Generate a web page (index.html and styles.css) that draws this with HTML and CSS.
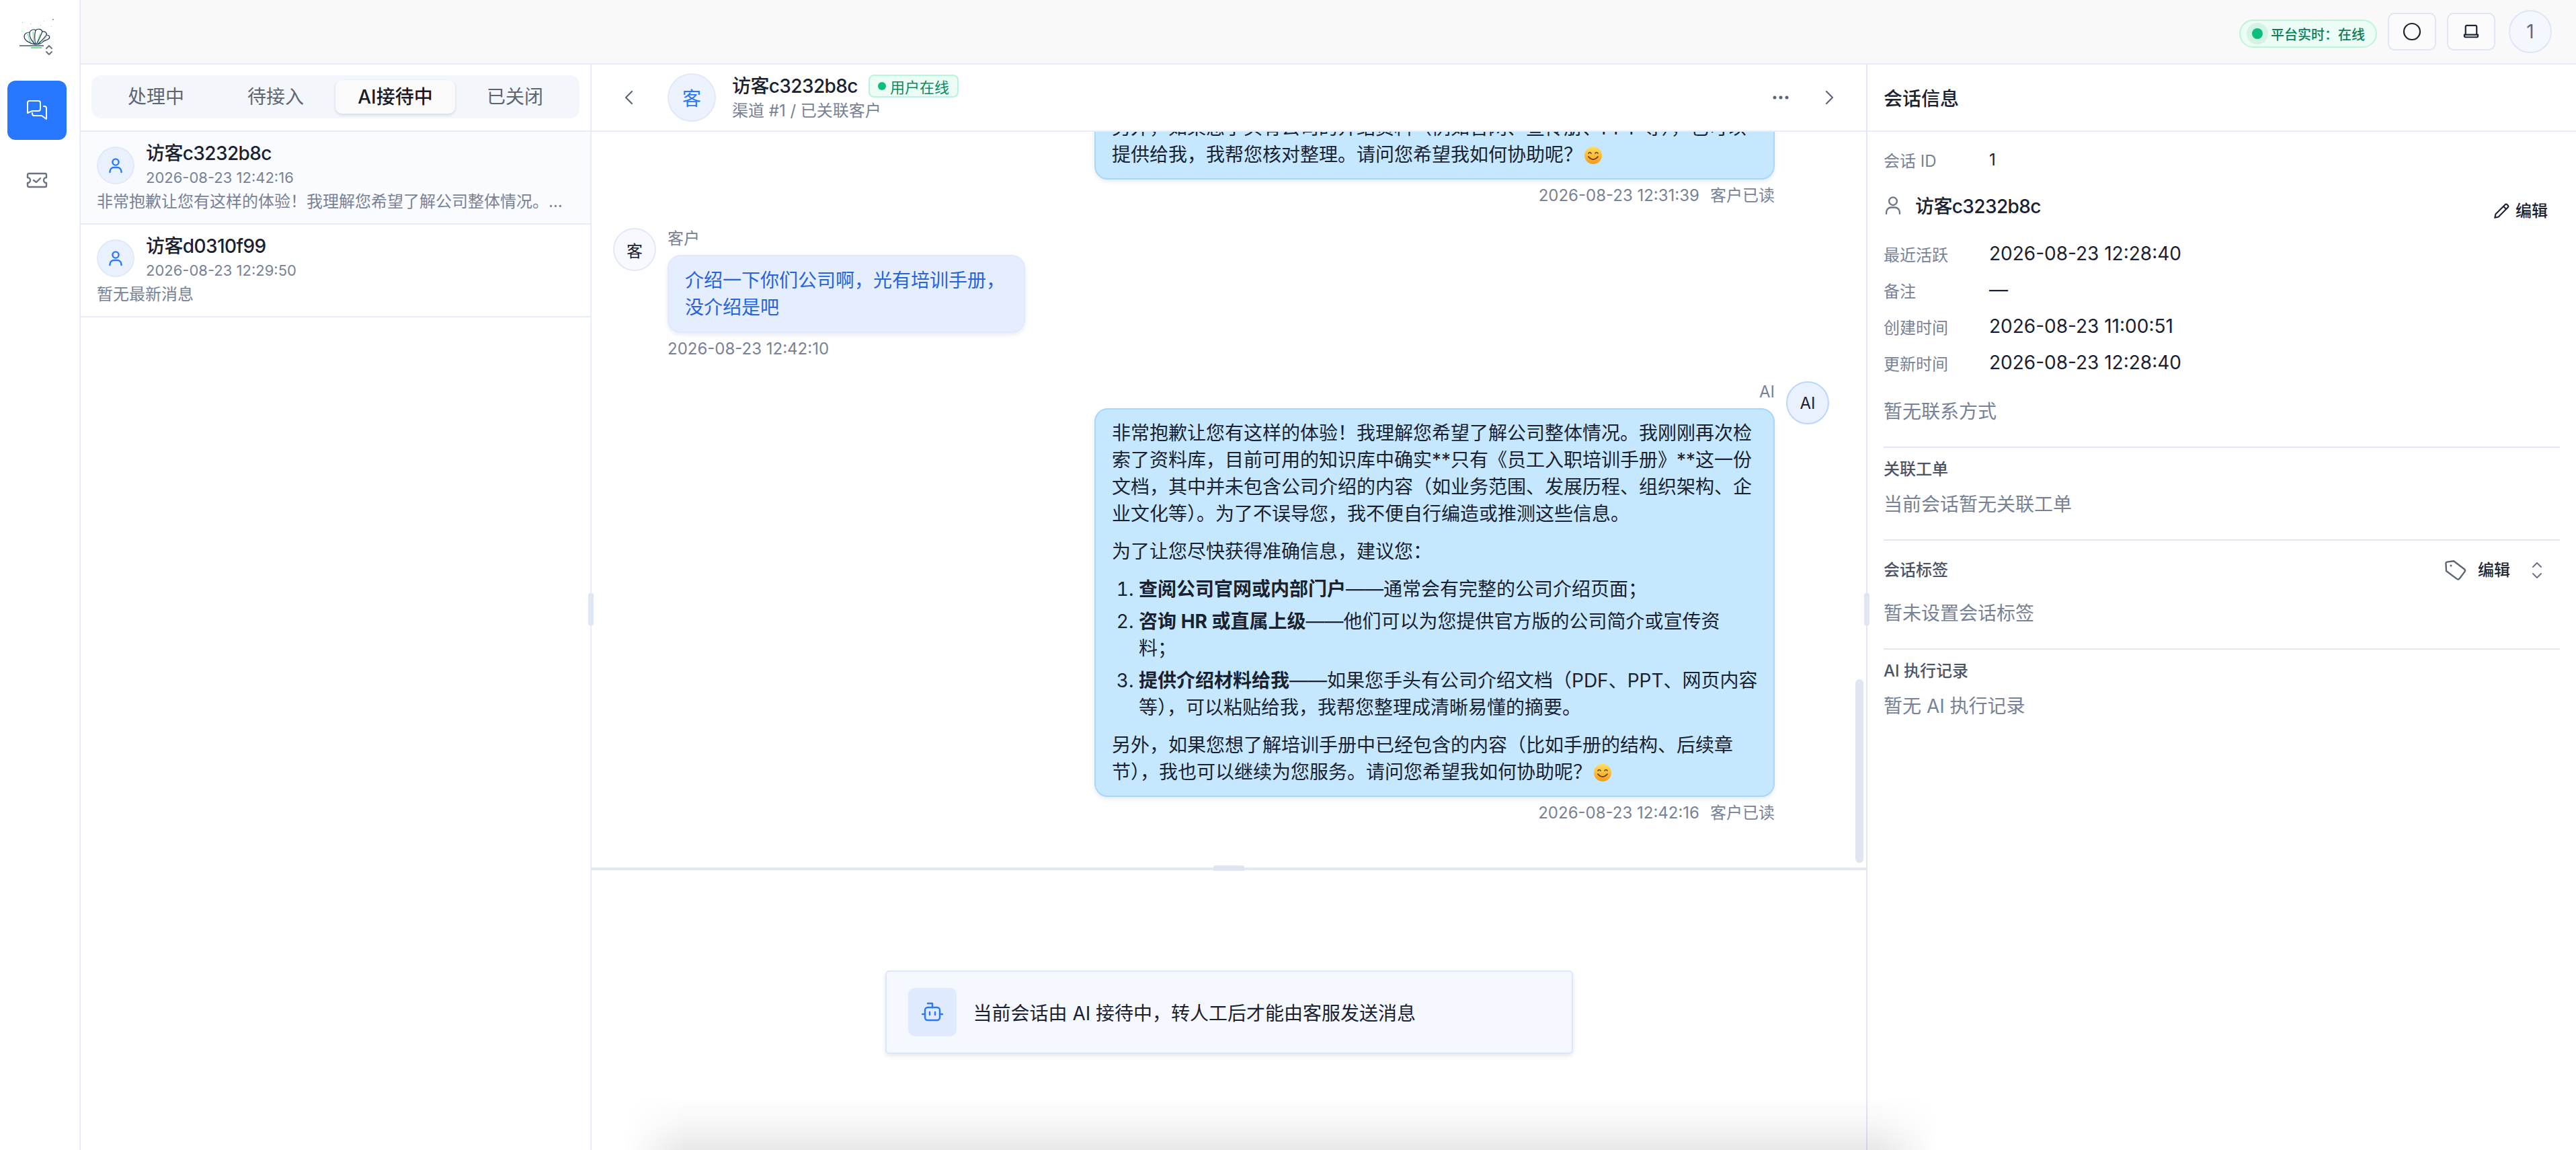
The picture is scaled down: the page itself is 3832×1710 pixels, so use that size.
FILE: index.html
```html
<!DOCTYPE html>
<html lang="zh-CN">
<head>
    <meta charset="UTF-8">
    <title>会话</title>
    <link rel="stylesheet" href="styles.css">
</head>
<body>
    <div class="app">
        <aside class="sidebar">
            <div class="logo">
                <svg width="80" height="90" viewBox="0 0 80 90" fill="none">
                    <g stroke="#4ade80" stroke-width="1">
                        <path d="M46 66 L41 50 M50 66 L49 47 M54 66 L60 50 M57 66 L70 54"/>
                        <path d="M46 71 H62" stroke="#5cf07f" stroke-width="2"/>
                    </g>
                    <g stroke="#1e3350" stroke-width="1.2" stroke-linejoin="round">
                        <path d="M52 66 C44 64 36 60 36 54 C36 50 40 48 44 48 C46 44 50 43 53 45 C56 42 62 43 63 47 C67 46 70 49 69 52 C74 52 75 56 72 58 C69 60 66 60 64 62 C62 65 58 66 52 66 Z"/>
                        <path d="M52 66 C47 60 43 55 44 48 M53 66 C51 58 51 52 53 45 M54 66 C58 60 60 54 63 47 M56 66 C60 62 65 58 69 52"/>
                    </g>
                    <path d="M29 68 H65" stroke="#46566e" stroke-width="1.6"/>
                    <g fill="#9aa5b5">
                        <rect x="33" y="33" width="1" height="1"/>
                        <rect x="45" y="35" width="1" height="1"/>
                        <rect x="60" y="37" width="1" height="1"/>
                        <rect x="78" y="28" width="2" height="2"/>
                    </g>
                    <g fill="#7fe6a0">
                        <rect x="65" y="31" width="1" height="1"/>
                        <rect x="76" y="39" width="1" height="1"/>
                        <rect x="32" y="46" width="1" height="1"/>
                    </g>
                    <path d="M69 72 L73 68 L77 72 M69 77 L73 81 L77 77" stroke="#6b7280" stroke-width="2" stroke-linecap="round" stroke-linejoin="round"/>
                </svg>
            </div>
            <a class="nav-item active">
                <svg width="32" height="32" viewBox="0 0 32 32" fill="none" stroke="#fff" stroke-width="2" stroke-linejoin="round" stroke-linecap="round">
                    <path d="M2 5a3 3 0 0 1 3-3h13a3 3 0 0 1 3 3v9a3 3 0 0 1-3 3H9l-7 3z"/>
                    <path d="M9 20v1a3 3 0 0 0 3 3h11l7 5V13a3 3 0 0 0-3-3h-1"/>
                </svg>
            </a>
            <a class="nav-item">
                <svg width="32" height="24" viewBox="0 0 32 24" fill="none" stroke="#6b7280" stroke-width="2.4" stroke-linejoin="round" stroke-linecap="round">
                    <path d="M4 2h24a2 2 0 0 1 2 2v4a4 4 0 0 0 0 8v4a2 2 0 0 1-2 2H4a2 2 0 0 1-2-2v-4a4 4 0 0 0 0-8V4a2 2 0 0 1 2-2z"/>
                    <path d="M11 12l4 3 6-6"/>
                </svg>
            </a>
        </aside>

        <div class="main">
            <header class="topbar">
                <div class="live-pill"><span class="live-dot"></span>平台实时：在线</div>
                <button class="top-btn">
                    <svg width="28" height="28" viewBox="0 0 28 28" fill="none" stroke="#1f2633" stroke-width="2.2"><circle cx="14" cy="14" r="12"/></svg>
                </button>
                <button class="top-btn">
                    <svg width="24" height="22" viewBox="0 0 26 24" fill="none" stroke="#1f2633" stroke-width="2.4" stroke-linejoin="round">
                        <path d="M4 17V4a2 2 0 0 1 2-2h14a2 2 0 0 1 2 2v13"/>
                        <path d="M2 17h22v2a2 2 0 0 1-2 2H4a2 2 0 0 1-2-2z"/>
                    </svg>
                </button>
                <div class="user-circle">1</div>
            </header>

            <div class="content">
                <section class="list-panel">
                    <div class="tabs-wrap">
                        <div class="tabs">
                            <div class="tab">处理中</div>
                            <div class="tab">待接入</div>
                            <div class="tab active">AI接待中</div>
                            <div class="tab">已关闭</div>
                        </div>
                    </div>
                    <div class="conv current">
                        <div class="conv-head">
                            <div class="conv-avatar">
                                <svg width="24" height="24" viewBox="0 0 24 24" fill="none" stroke="#2877ff" stroke-width="2.4" stroke-linecap="round"><circle cx="12" cy="7" r="4.6"/><path d="M3.5 22v-1a6 6 0 0 1 6-6h5a6 6 0 0 1 6 6v1"/></svg>
                            </div>
                            <div>
                                <div class="conv-name">访客c3232b8c</div>
                                <div class="conv-time">2026-08-23 12:42:16</div>
                            </div>
                        </div>
                        <div class="conv-last">非常抱歉让您有这样的体验！我理解您希望了解公司整体情况。我刚刚再次检索了资料库</div>
                    </div>
                    <div class="conv">
                        <div class="conv-head">
                            <div class="conv-avatar">
                                <svg width="24" height="24" viewBox="0 0 24 24" fill="none" stroke="#2877ff" stroke-width="2.4" stroke-linecap="round"><circle cx="12" cy="7" r="4.6"/><path d="M3.5 22v-1a6 6 0 0 1 6-6h5a6 6 0 0 1 6 6v1"/></svg>
                            </div>
                            <div>
                                <div class="conv-name">访客d0310f99</div>
                                <div class="conv-time">2026-08-23 12:29:50</div>
                            </div>
                        </div>
                        <div class="conv-last">暂无最新消息</div>
                    </div>
                </section>

                <section class="chat-panel">
                    <div class="chat-head">
                        <button class="icon-btn">
                            <svg width="24" height="24" viewBox="0 0 24 24" fill="none" stroke="#5b6576" stroke-width="2.2" stroke-linecap="round" stroke-linejoin="round"><path d="M16 3l-9 9 9 9"/></svg>
                        </button>
                        <div class="chat-avatar">客</div>
                        <div class="chat-title">
                            <div class="chat-name-row">
                                <span class="chat-name">访客c3232b8c</span>
                                <span class="online-badge"><i></i>用户在线</span>
                            </div>
                            <div class="chat-sub">渠道 #1 / 已关联客户</div>
                        </div>
                        <button class="icon-btn">
                            <svg width="24" height="24" viewBox="0 0 24 24" fill="#5b6576"><circle cx="3" cy="12" r="2.500"/><circle cx="12" cy="12" r="2.500"/><circle cx="21" cy="12" r="2.500"/></svg>
                        </button>
                        <button class="icon-btn">
                            <svg width="24" height="24" viewBox="0 0 24 24" fill="none" stroke="#5b6576" stroke-width="2.2" stroke-linecap="round" stroke-linejoin="round"><path d="M8 3l9 9-9 9"/></svg>
                        </button>
                    </div>

                    <div class="messages">
                        <div class="msg out">
                            <div class="msg-body">
                                <div class="bubble ai">
                                    <p>另外，如果您手头有公司的介绍资料（例如官网、宣传册、PPT 等），也可以提供给我，我帮您核对整理。请问您希望我如何协助呢？<svg class="emoji" width="28" height="32" viewBox="0 0 28 32"><use href="#smile"/></svg></p>
                                </div>
                                <div class="meta">2026-08-23 12:31:39<span>客户已读</span></div>
                            </div>
                            <div class="spacer"></div>
                        </div>

                        <div class="msg">
                            <div class="msg-avatar">客</div>
                            <div class="msg-body">
                                <div class="msg-label">客户</div>
                                <div class="bubble customer">介绍一下你们公司啊，光有培训手册，没介绍是吧</div>
                                <div class="meta">2026-08-23 12:42:10</div>
                            </div>
                        </div>

                        <div class="msg out">
                            <div class="msg-body">
                                <div class="msg-label">AI</div>
                                <div class="bubble ai">
                                    <p>非常抱歉让您有这样的体验！我理解您希望了解公司整体情况。我刚刚再次检索了资料库，目前可用的知识库中确实**只有《员工入职培训手册》**这一份文档，其中并未包含公司介绍的内容（如业务范围、发展历程、组织架构、企业文化等）。为了不误导您，我不便自行编造或推测这些信息。</p>
                                    <p>为了让您尽快获得准确信息，建议您：</p>
                                    <ol>
                                        <li><b>查阅公司官网或内部门户</b>——通常会有完整的公司介绍页面；</li>
                                        <li><b>咨询 HR 或直属上级</b>——他们可以为您提供官方版的公司简介或宣传资料；</li>
                                        <li><b>提供介绍材料给我</b>——如果您手头有公司介绍文档（PDF、PPT、网页内容等），可以粘贴给我，我帮您整理成清晰易懂的摘要。</li>
                                    </ol>
                                    <p>另外，如果您想了解培训手册中已经包含的内容（比如手册的结构、后续章节），我也可以继续为您服务。请问您希望我如何协助呢？<svg class="emoji" width="28" height="32" viewBox="0 0 28 32"><use href="#smile"/></svg></p>
                                </div>
                                <div class="meta">2026-08-23 12:42:16<span>客户已读</span></div>
                            </div>
                            <div class="msg-avatar ai-avatar">AI</div>
                        </div>
                    </div>
                    <div class="scroll-thumb"></div>

                    <div class="composer-line"><span></span></div>
                    <div class="composer">
                        <div class="ai-notice">
                            <div class="notice-icon">
                                <svg width="32" height="30" viewBox="0 0 32 30" fill="none" stroke="#2877ff" stroke-width="2.4" stroke-linecap="round" stroke-linejoin="round">
                                    <path d="M9 2h7v6"/>
                                    <rect x="5" y="8" width="22" height="19" rx="4"/>
                                    <path d="M1 18h4M27 18h4"/>
                                    <path d="M12 15v4M20 15v4"/>
                                </svg>
                            </div>
                            <span>当前会话由 AI 接待中，转人工后才能由客服发送消息</span>
                        </div>
                    </div>
                    <div class="resize-grip left"></div>
                    <div class="resize-grip right"></div>
                </section>

                <section class="info-panel">
                    <div class="info-head">会话信息</div>
                    <div class="info-body">
                        <div class="info-row"><label>会话 ID</label><span class="small">1</span></div>
                        <div class="info-person">
                            <div class="person-name">
                                <svg width="28" height="28" viewBox="0 0 24 24" fill="none" stroke="#6b7587" stroke-width="2" stroke-linecap="round"><circle cx="12" cy="7" r="5"/><path d="M3.5 23v-2a6 6 0 0 1 6-6h5a6 6 0 0 1 6 6v2"/></svg>
                                访客c3232b8c
                            </div>
                            <div class="edit-link">
                                <svg width="26" height="26" viewBox="0 0 24 24" fill="none" stroke="#1f2633" stroke-width="2" stroke-linejoin="round" stroke-linecap="round"><path d="M3 21l1.200-5L17 3.200a2.200 2.200 0 0 1 3.100 0l.7.7a2.200 2.200 0 0 1 0 3.100L8 19.800z"/><path d="M15 5.500l3.500 3.500"/></svg>
                                编辑
                            </div>
                        </div>
                        <div class="info-row"><label>最近活跃</label><span>2026-08-23 12:28:40</span></div>
                        <div class="info-row"><label>备注</label><span>—</span></div>
                        <div class="info-row"><label>创建时间</label><span>2026-08-23 11:00:51</span></div>
                        <div class="info-row"><label>更新时间</label><span>2026-08-23 12:28:40</span></div>
                        <div class="info-text contact">暂无联系方式</div>
                    </div>
                    <div class="info-section">
                        <div class="section-title">关联工单</div>
                        <div class="info-text">当前会话暂无关联工单</div>
                    </div>
                    <div class="info-section tags">
                        <div class="section-title">
                            会话标签
                            <div class="tag-tools">
                                <svg width="34" height="34" viewBox="0 0 34 34" fill="none" stroke="#5b6576" stroke-width="2.4" stroke-linejoin="round"><path d="M4 5a2 2 0 0 1 2-2h10l14 14a3 3 0 0 1 0 4l-9 9a3 3 0 0 1-4 0L3 16z" transform="rotate(-8 17 17)"/><circle cx="10" cy="10" r="1.500" fill="#5b6576" stroke="none"/></svg>
                                <span>编辑</span>
                                <svg width="20" height="28" viewBox="0 0 20 28" fill="none" stroke="#6b7587" stroke-width="2" stroke-linecap="round" stroke-linejoin="round"><path d="M4 9l6-6 6 6M4 19l6 6 6-6"/></svg>
                            </div>
                        </div>
                        <div class="info-text">暂未设置会话标签</div>
                    </div>
                    <div class="info-section last">
                        <div class="section-title">AI 执行记录</div>
                        <div class="info-text">暂无 AI 执行记录</div>
                    </div>
                </section>
            </div>
        </div>
    </div>
    <div class="edge-shadow"></div>

    <svg width="0" height="0" class="defs">
        <defs>
            <linearGradient id="smile-fill" x1="0" y1="0" x2="0" y2="1">
                <stop offset="0" stop-color="#ffdf5e"/>
                <stop offset="1" stop-color="#f59a1c"/>
            </linearGradient>
            <symbol id="smile" viewBox="0 0 28 32">
                <circle cx="14" cy="16" r="13" fill="url(#smile-fill)"/>
                <path d="M7 13q2-3 4 0M17 13q2-3 4 0" stroke="#6b3d0e" stroke-width="1.600" fill="none" stroke-linecap="round"/>
                <path d="M7 18q7 8 14 0" stroke="#6b3d0e" stroke-width="1.800" fill="none" stroke-linecap="round"/>
            </symbol>
        </defs>
    </svg>
</body>
</html>
```

FILE: styles.css
```css
* {
    box-sizing: border-box;
}

html,
body {
    margin: 0;
    height: 100%;
    overflow: hidden;
}

body {
    font-family: Inter, "Noto Sans CJK SC", sans-serif;
    font-size: 28px;
    color: #1a2130;
    background-color: #fff;
}

button {
    font-family: inherit;
    background: none;
    border: none;
    padding: 0;
    display: flex;
    align-items: center;
    justify-content: center;
}

.defs {
    position: absolute;
}

.app {
    display: flex;
    height: 1710px;
}

/* 左侧导航 */
.sidebar {
    width: 120px;
    flex-shrink: 0;
    border-right: 2px solid #e7ecf6;
    padding: 0 11px;
    display: flex;
    flex-direction: column;
}

.logo {
    height: 120px;
    margin: 0 -11px;
}

.logo svg {
    display: block;
}

.nav-item {
    width: 88px;
    height: 88px;
    border-radius: 12px;
    display: flex;
    align-items: center;
    justify-content: center;
}

.nav-item.active {
    background-color: #2878ff;
    margin-bottom: 16px;
}

.main {
    flex: 1;
    min-width: 0;
    display: flex;
    flex-direction: column;
}

/* 顶栏 */
.topbar {
    height: 96px;
    flex-shrink: 0;
    background-color: #f9f9fa;
    border-bottom: 2px solid #e7ecf6;
    padding: 0 36px 0 0;
    display: flex;
    align-items: center;
    justify-content: flex-end;
}

.live-pill {
    height: 42px;
    width: 205px;
    margin-right: 16px;
    margin-top: 6px;
    padding-left: 9px;
    border: 2px solid #bdf5d9;
    border-radius: 21px;
    background-color: #ebfdf4;
    color: #0c7f5a;
    font-size: 20px;
    font-weight: 500;
    display: flex;
    align-items: center;
    white-space: nowrap;
}

.live-dot {
    width: 32px;
    height: 32px;
    margin-right: 4px;
    border-radius: 50%;
    background-color: #d3f3e4;
    position: relative;
    flex-shrink: 0;
}

.live-dot::after {
    content: "";
    position: absolute;
    left: 8px;
    top: 8px;
    width: 16px;
    height: 16px;
    border-radius: 50%;
    background-color: #0abf7b;
}

.top-btn {
    width: 72px;
    height: 56px;
    margin-right: 16px;
    border: 2px solid #dfe7f4;
    border-radius: 10px;
    background-color: #fbfbfc;
}

.user-circle {
    width: 64px;
    height: 64px;
    margin-left: 4px;
    border: 2px solid #dfe7f4;
    border-radius: 50%;
    background-color: #f4f7fd;
    color: #5f6b80;
    font-size: 28px;
    display: flex;
    align-items: center;
    justify-content: center;
}

.content {
    flex: 1;
    min-height: 0;
    display: flex;
}

/* 会话列表 */
.list-panel {
    width: 760px;
    flex-shrink: 0;
    border-right: 2px solid #e7ecf6;
}

.tabs-wrap {
    height: 100px;
    padding: 16px 16px 0;
    border-bottom: 2px solid #e7ecf6;
}

.tabs {
    height: 64px;
    padding: 7px;
    border-radius: 14px;
    background-color: #f3f6fb;
    display: grid;
    grid-template-columns: repeat(4, 1fr);
}

.tab {
    border-radius: 10px;
    color: #5f6672;
    display: flex;
    align-items: center;
    justify-content: center;
    line-height: 50px;
}

.tab.active {
    background-color: #fafafa;
    color: #161b26;
    font-weight: 500;
    box-shadow: 0 2px 4px rgba(30, 40, 70, 0.14);
}

.conv {
    height: 138px;
    padding: 14px 24px 0;
    border-bottom: 2px solid #e7ecf6;
}

.conv.current {
    background-color: #fafbfe;
}

.conv-head {
    display: flex;
    align-items: center;
    gap: 17px;
}

.conv-avatar {
    width: 56px;
    height: 56px;
    flex-shrink: 0;
    border: 2px solid #e2e9f5;
    border-radius: 50%;
    background-color: #e9f0fe;
    display: flex;
    align-items: center;
    justify-content: center;
}

.conv-name {
    line-height: 36px;
    font-weight: 500;
    letter-spacing: -0.6px;
}

.conv-time {
    line-height: 36px;
    font-size: 22px;
    color: #778296;
}

.conv-last {
    line-height: 36px;
    font-size: 24px;
    color: #778296;
    white-space: nowrap;
    overflow: hidden;
    text-overflow: ellipsis;
}

/* 聊天区 */
.chat-panel {
    width: 1898px;
    flex-shrink: 0;
    border-right: 2px solid #e2e8f3;
    display: flex;
    flex-direction: column;
    position: relative;
}

.chat-head {
    height: 100px;
    flex-shrink: 0;
    border-bottom: 2px solid #e7ecf6;
    background-color: #fff;
    padding: 0 31px 0 32px;
    display: flex;
    align-items: center;
    gap: 24px;
    position: relative;
    z-index: 1;
}

.icon-btn {
    width: 48px;
    height: 48px;
    flex-shrink: 0;
}

.chat-avatar {
    width: 72px;
    height: 72px;
    margin-left: 9px;
    flex-shrink: 0;
    border: 2px solid #e2e9f5;
    border-radius: 50%;
    background-color: #ecf2fe;
    color: #2877ff;
    font-size: 28px;
    display: flex;
    align-items: center;
    justify-content: center;
}

.chat-title {
    flex: 1;
}

.chat-name-row {
    display: flex;
    align-items: center;
    gap: 16px;
}

.chat-name {
    font-weight: 500;
    line-height: 36px;
    letter-spacing: -0.6px;
}

.online-badge {
    height: 34px;
    padding: 0 12px;
    border: 2px solid #b9f5d8;
    border-radius: 8px;
    background-color: #ecfdf5;
    color: #0c8a5e;
    font-size: 22px;
    display: flex;
    align-items: center;
    gap: 6px;
}

.online-badge i {
    width: 12px;
    height: 12px;
    border-radius: 50%;
    background-color: #0abf7b;
}

.chat-sub {
    font-size: 24px;
    line-height: 32px;
    color: #778296;
    margin-top: 3px;
}

.messages {
    height: 1094px;
    flex-shrink: 0;
    padding: 0 55px 65px 32px;
    overflow: hidden;
    display: flex;
    flex-direction: column;
    justify-content: flex-end;
    gap: 32px;
}

.msg {
    display: flex;
    gap: 17px;
    flex-shrink: 0;
}

.msg.out {
    justify-content: flex-end;
}

.msg-avatar {
    width: 64px;
    height: 64px;
    flex-shrink: 0;
    border: 2px solid #e2e9f5;
    border-radius: 50%;
    background-color: #f7f9fe;
    font-size: 24px;
    display: flex;
    align-items: center;
    justify-content: center;
}

.ai-avatar {
    background-color: #e9f0fe;
    border-color: #bcd6fb;
}

.spacer {
    width: 64px;
    flex-shrink: 0;
}

.msg-body {
    display: flex;
    flex-direction: column;
}

.msg.out .msg-body {
    align-items: flex-end;
}

.msg-label {
    height: 32px;
    line-height: 32px;
    margin-bottom: 8px;
    font-size: 24px;
    color: #778296;
}

.bubble {
    border-radius: 20px;
    line-height: 40px;
    padding: 15px 24px;
    box-shadow: 0 3px 6px rgba(60, 90, 140, 0.12);
}

.bubble.customer {
    width: 532px;
    padding: 16px 24px;
    background-color: #e5eeff;
    border: 2px solid #e0e9fd;
    color: #2563e0;
}

.bubble.ai {
    width: 1012px;
    background-color: #c5e8fe;
    border: 2px solid #a9d6fb;
    color: #1a2130;
}

.bubble p {
    margin: 0 0 16px;
}

.bubble p:last-child {
    margin-bottom: 0;
}

.bubble ol {
    margin: 0 0 16px;
    padding-left: 40px;
}

.bubble li {
    margin-bottom: 8px;
}

.bubble li:last-child {
    margin-bottom: 0;
    margin-right: -20px;
}

.bubble b {
    font-weight: 700;
}

.emoji {
    vertical-align: -7px;
    margin-left: 2px;
}

.meta {
    height: 32px;
    line-height: 32px;
    margin-top: 8px;
    font-size: 24px;
    color: #778296;
    white-space: nowrap;
}

.meta span {
    margin-left: 16px;
}

.scroll-thumb {
    position: absolute;
    left: 1880px;
    top: 914px;
    width: 12px;
    height: 273px;
    border-radius: 6px;
    background-color: #dfe6f2;
}

.composer-line {
    height: 4px;
    flex-shrink: 0;
    background-color: #e2e9f5;
    position: relative;
}

.composer-line span {
    position: absolute;
    left: 925px;
    top: -3px;
    width: 46px;
    height: 8px;
    border-radius: 2px;
    background-color: #dfe6f2;
}

.composer {
    flex: 1;
    padding-top: 5px;
    display: flex;
    align-items: center;
    justify-content: center;
}

.ai-notice {
    width: 1023px;
    height: 124px;
    padding: 0 32px;
    border: 2px solid #dce7fd;
    border-radius: 6px;
    background-color: #f5f8ff;
    box-shadow: 0 3px 6px rgba(60, 80, 120, 0.14);
    display: flex;
    align-items: center;
    gap: 25px;
}

.notice-icon {
    width: 72px;
    height: 72px;
    border-radius: 10px;
    background-color: #e0eafe;
    display: flex;
    align-items: center;
    justify-content: center;
}

.resize-grip {
    position: absolute;
    top: 786px;
    width: 8px;
    height: 48px;
    border-radius: 3px;
    background-color: #dfe6f2;
}

.resize-grip.left {
    left: -5px;
}

.resize-grip.right {
    right: -5px;
}

/* 右侧信息 */
.info-panel {
    flex: 1;
    min-width: 0;
    padding: 0 24px;
}

.info-head {
    height: 100px;
    margin: 0 -24px;
    padding: 0 24px;
    border-bottom: 2px solid #e7ecf6;
    font-weight: 500;
    display: flex;
    align-items: center;
}

.info-body {
    padding: 14px 0 32px;
    border-bottom: 2px solid #e2e8f3;
}

.info-row {
    height: 54px;
    display: flex;
    align-items: center;
}

.info-row label {
    width: 157px;
    flex-shrink: 0;
    font-size: 24px;
    color: #778296;
}

.info-row span {
    font-size: 28px;
}

.info-row span.small {
    font-size: 24px;
}

.info-person {
    height: 50px;
    margin: 16px 0 20px;
    display: flex;
    align-items: flex-start;
    justify-content: space-between;
}

.person-name {
    display: flex;
    align-items: center;
    gap: 19px;
    height: 50px;
    font-weight: 500;
    letter-spacing: -0.6px;
}

.edit-link {
    display: flex;
    align-items: center;
    gap: 8px;
    margin: 18px 18px 0 0;
    font-size: 24px;
    font-weight: 500;
    line-height: 32px;
}

.info-text {
    font-size: 28px;
    line-height: 40px;
    color: #778296;
}

.info-text.contact {
    margin-top: 26px;
}

.info-section {
    padding: 16px 0 32px;
    border-bottom: 2px solid #e2e8f3;
}

.info-section.last {
    border-bottom: none;
}

.section-title {
    font-size: 24px;
    line-height: 32px;
    font-weight: 500;
    color: #4a5466;
    margin-bottom: 16px;
}

.tags {
    padding-top: 24px;
}

.tags .section-title {
    height: 40px;
    margin-bottom: 24px;
    display: flex;
    align-items: center;
    justify-content: space-between;
}

.tag-tools {
    display: flex;
    align-items: center;
    gap: 16px;
    padding-right: 24px;
    color: #1f2633;
}

.tag-tools svg:last-child {
    margin-left: 14px;
}

/* 底部阴影 */
.edge-shadow {
    position: absolute;
    left: 930px;
    right: 950px;
    bottom: 0;
    height: 80px;
    background: linear-gradient(to top, rgba(0, 0, 0, 0.09), rgba(0, 0, 0, 0.03) 50%, transparent);
    -webkit-mask-image: linear-gradient(to right, transparent, #000 90px, #000 calc(100% - 90px), transparent);
    mask-image: linear-gradient(to right, transparent, #000 90px, #000 calc(100% - 90px), transparent);
}
```
